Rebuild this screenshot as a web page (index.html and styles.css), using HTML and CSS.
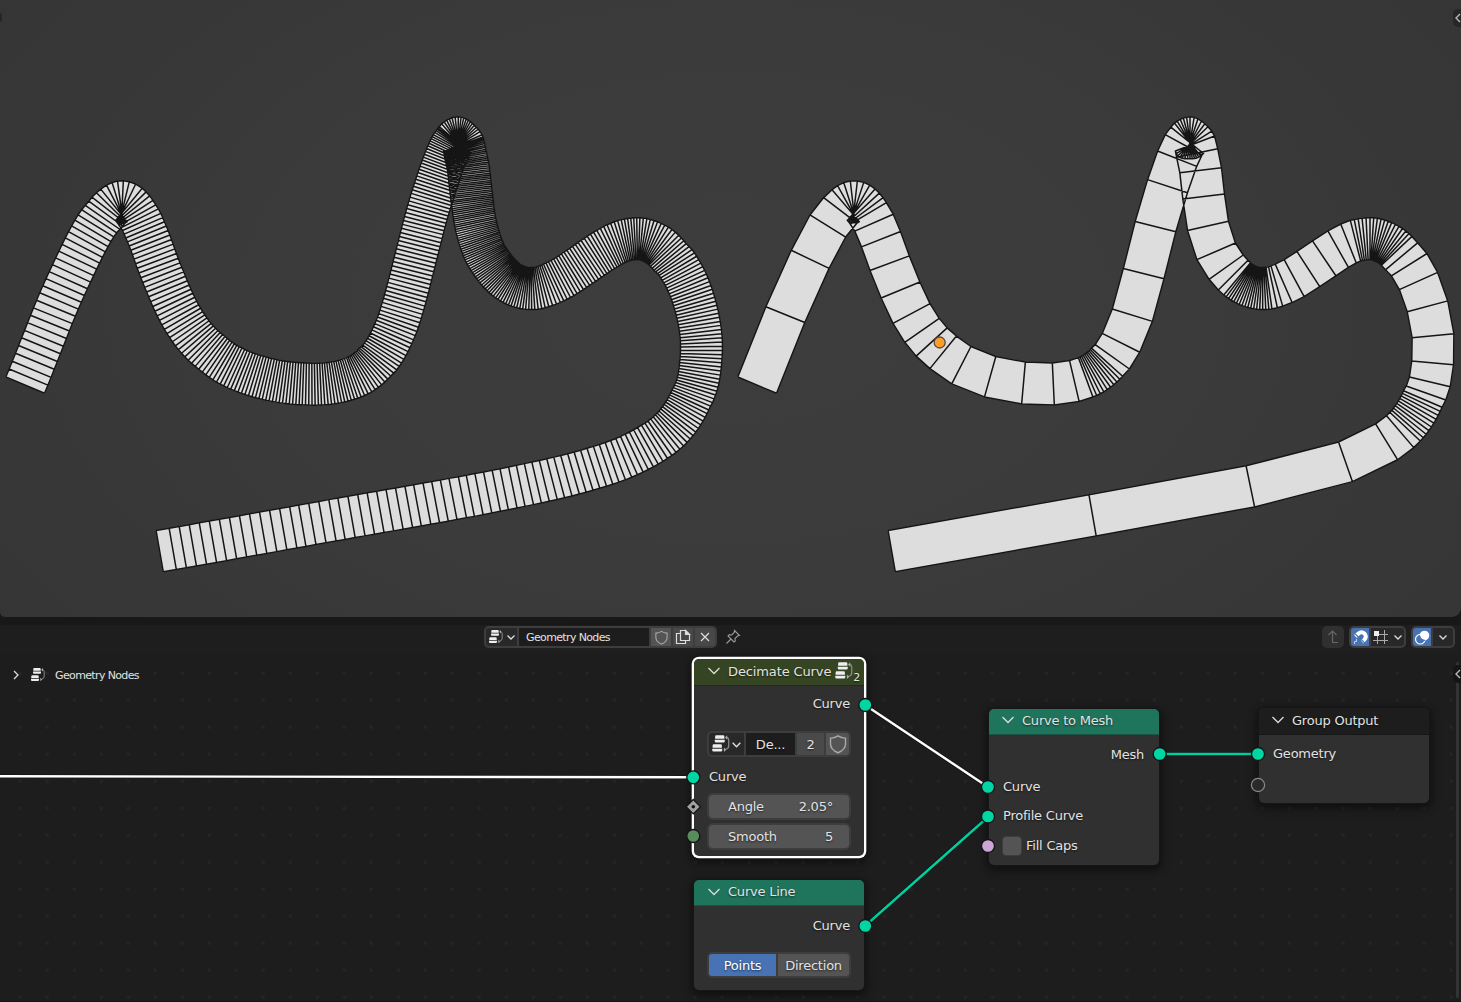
FILE: index.html
```html
<!DOCTYPE html>
<html lang="en">
<head>
<meta charset="utf-8">
<title>Geometry Nodes</title>
<link rel="stylesheet" href="styles.css">
</head>
<body>
<svg class="defs" width="0" height="0">
  <symbol id="tree" viewBox="0 0 16 16">
    <path d="M4.300 1h5.400q1 0 1 1v1.800H3.300V2q0-1 1-1zM3 4.600h8v1.200q0 1-1 1H4q-1 0-1-1zM2.300 8.200h5.400q1 0 1 1V11H1.300V9.200q0-1 1-1zM1 11.800h8V13q0 1-1 1H2q-1 0-1-1z" fill="#eee"/>
    <path d="M12.500 2.700q1.700.3 1.700 2v4.500q0 2.500-2.500 3" fill="none" stroke="#8c8c8c"/>
    <path d="M13 1v3.500L11.200 2.700zM10.300 10.700v3.600l2-1.800z" fill="#aaa"/>
  </symbol>
  <symbol id="down" viewBox="0 0 10 10"><path d="M1.500 3.500 5 7l3.500-3.500" fill="none" stroke="#ddd" stroke-width="1.300"/></symbol>
  <symbol id="shield" viewBox="0 0 16 16"><path d="M8 1.500q3 2 6 1.800V8q0 4.500-6 7-6-2.500-6-7V3.300q3 .2 6-1.800z" fill="none" stroke="#aaa" stroke-width="1.100"/></symbol>
</svg>

<main class="screen">
  <section class="viewport">
    <svg id="mesh" class="mesh" viewBox="0 0 1461 617" width="1461" height="617"></svg>
    <span class="tab tab-top"><svg width="7" height="12" viewBox="0 0 7 12"><path d="M6 2 2 6l4 4" fill="none" stroke="#bbb" stroke-width="1.400"/></svg></span>
    <span class="stub"></span>
  </section>

  <section class="editor">
    <header class="toolbar">
      <div class="group datablock">
        <span class="cell pick"><svg width="16" height="16"><use href="#tree"/></svg><svg width="10" height="10"><use href="#down"/></svg></span>
        <span class="cell name">Geometry Nodes</span>
        <span class="cell light"><svg width="15" height="15"><use href="#shield"/></svg></span>
        <span class="cell mid"><svg width="16" height="16" viewBox="0 0 16 16" fill="none" stroke="#ddd" stroke-width="1.200"><path d="M5.500 1.500h5l4 4v6h-9zM5 4.500H1.500v10h9V12"/><path d="M10.500 1.500v4h4z" fill="#ddd"/></svg></span>
        <span class="cell mid"><svg width="12" height="12" viewBox="0 0 12 12"><path d="m2 2 8 8m0-8-8 8" stroke="#ddd" stroke-width="1.200"/></svg></span>
      </div>
      <svg class="pin" width="16" height="16" viewBox="0 0 16 16"><path d="M9.500 1.500 14.500 6.500 12.500 7l-2.500 2.500.3 2.500-1.300 1L3 7l1.300-1.300 2.400.3L9.200 3.500zM6 10l-4.500 4.500" fill="none" stroke="#999" stroke-width="1.100"/></svg>
      <div class="tools">
        <span class="group up"><svg width="18" height="18" viewBox="0 0 18 18"><path d="M14 14.500H8.500V3M4.500 7l4-4 4 4" fill="none" stroke="#666" stroke-width="1.200"/></svg></span>
        <div class="group snap">
          <span class="cell blue"><svg width="17" height="17" viewBox="0 0 17 17"><path d="M3.500 7.500 6.500 4.500Q9.500 2 12.500 4.500q2.700 3-.3 6.500l-2 2" fill="none" stroke="#fff" stroke-width="4"/><path d="m3.300 5 3.500 3.500M9.300 10.500l3.500 3.500" stroke="#4772b3" stroke-width="1.100"/><path d="M2.500 15v-2.500h2V10" fill="none" stroke="#c5d3e9"/></svg></span>
          <span class="cell grid"><svg width="16" height="16" viewBox="0 0 16 16"><path d="M5.500 6v9M12.500 1v14M6 5.500h10M1 11.500h15" stroke="#aaa"/><path d="M2 2h5v5H2z" fill="#eee"/></svg><svg width="10" height="10"><use href="#down"/></svg></span>
        </div>
        <div class="group over">
          <span class="cell blue"><svg width="17" height="17" viewBox="0 0 17 17"><circle cx="10.500" cy="6.500" r="4.800" fill="#fff"/><circle cx="6.300" cy="10.200" r="4.800" fill="none" stroke="#fff" stroke-width="1.200"/><path d="M5.700 6.500a4.800 4.800 0 0 0 5.200 4.800" fill="none" stroke="#4772b3" stroke-width="1.200"/></svg></span>
          <span class="cell drop"><svg width="10" height="10"><use href="#down"/></svg></span>
        </div>
      </div>
    </header>

    <div class="crumbs">
      <svg width="10" height="12" viewBox="0 0 10 12"><path d="M3 2l4 4-4 4" fill="none" stroke="#ddd" stroke-width="1.300"/></svg>
      <svg class="crumb-icon" width="16" height="16"><use href="#tree"/></svg>
      <span>Geometry Nodes</span>
    </div>

    <svg class="wires" width="1461" height="377" viewBox="0 625 1461 377" fill="none">
      <g stroke="#111" stroke-width="4" opacity=".6"><path d="M0 776.300 693 777.300M865 705 988 787M865 926 988 817M1160 754h98"/></g>
      <g stroke-width="2.400"><path d="M0 776.300 693 777.300M865 705 988 787" stroke="#fff"/><path d="M865 926 988 817M1160 754h98" stroke="#00cf9f"/></g>
    </svg>

    <article class="node decimate">
      <h2 class="head"><svg width="14" height="10" viewBox="0 0 14 10"><path d="M1.500 2 7 7.500 12.500 2" fill="none" stroke="#ddd" stroke-width="1.300"/></svg>Decimate Curve<svg class="head-icon" width="20" height="20"><use href="#tree"/></svg><small>2</small></h2>
      <div class="row out">Curve</div>
      <div class="group block">
        <span class="cell pick"><svg width="20" height="20"><use href="#tree"/></svg><svg width="11" height="11"><use href="#down"/></svg></span>
        <span class="cell name">De...</span>
        <span class="cell users">2</span>
        <span class="cell light"><svg width="20" height="20"><use href="#shield"/></svg></span>
      </div>
      <div class="row in">Curve</div>
      <div class="field"><span>Angle</span><span>2.05°</span></div>
      <div class="field"><span>Smooth</span><span>5</span></div>
    </article>

    <article class="node line">
      <h2 class="head"><svg width="14" height="10" viewBox="0 0 14 10"><path d="M1.500 2 7 7.500 12.500 2" fill="none" stroke="#ddd" stroke-width="1.300"/></svg>Curve Line</h2>
      <div class="row out">Curve</div>
      <div class="group toggle"><span class="cell blue">Points</span><span class="cell light">Direction</span></div>
    </article>

    <article class="node tomesh">
      <h2 class="head"><svg width="14" height="10" viewBox="0 0 14 10"><path d="M1.500 2 7 7.500 12.500 2" fill="none" stroke="#ddd" stroke-width="1.300"/></svg>Curve to Mesh</h2>
      <div class="row out">Mesh</div>
      <div class="row in first">Curve</div>
      <div class="row in">Profile Curve</div>
      <div class="row in check"><i></i>Fill Caps</div>
    </article>

    <article class="node output">
      <h2 class="head"><svg width="14" height="10" viewBox="0 0 14 10"><path d="M1.500 2 7 7.500 12.500 2" fill="none" stroke="#ddd" stroke-width="1.300"/></svg>Group Output</h2>
      <div class="row in">Geometry</div>
    </article>

    <svg class="wires" width="1461" height="377" viewBox="0 625 1461 377">
      <g fill="#00d6a3" stroke="#141414" stroke-width="1.300">
        <circle cx="865.300" cy="705" r="6.500"/><circle cx="693.300" cy="777.300" r="6.500"/>
        <circle cx="865.300" cy="926" r="6.500"/><circle cx="988" cy="787" r="6.500"/>
        <circle cx="988" cy="816.500" r="6.500"/><circle cx="1159.700" cy="754" r="6.500"/>
        <circle cx="1258" cy="754" r="6.500"/>
        <circle cx="693.300" cy="836" r="6.500" fill="#598c5c"/>
        <circle cx="988" cy="846" r="6.500" fill="#cca6d6"/>
        <path d="m693.300 799.500 7.200 7.200-7.200 7.200-7.200-7.200z" fill="#a1a1a1"/>
      </g>
      <circle cx="693.300" cy="806.700" r="1.800" fill="#111"/>
      <circle cx="1258" cy="785" r="6.600" fill="#2a2a2a" stroke="#8a8a8a" stroke-width="1.200"/>
    </svg>
    <span class="scroll"></span>
    <span class="tab tab-node"><svg width="7" height="12" viewBox="0 0 7 12"><path d="M6 2 2 6l4 4" fill="none" stroke="#bbb" stroke-width="1.400"/></svg></span>
  </section>
</main>
<script src="mesh.js"></script>
</body>
</html>
```
FILE: styles.css
```css
* { box-sizing: border-box; }
body {
  margin: 0;
  background: #181818;
  color: #e2e2e2;
  font: 13px/1 "DejaVu Sans", "Noto Sans", sans-serif;
  overflow: hidden;
}
svg { display: block; flex: none; }
.defs { position: absolute; }
.screen { display: flex; flex-direction: column; gap: 8px; width: 1461px; height: 1002px; background: #181818; }

.viewport {
  position: relative;
  flex: 0 0 617px;
  overflow: hidden;
  border-radius: 0 0 9px 5px;
  background: radial-gradient(ellipse 900px 560px at 50% 50%, #3d3d3d 0%, #3b3b3b 50%, #353535 100%);
}
.tab { position: absolute; right: 0; display: flex; align-items: center; width: 8px; height: 18px; padding-left: 1px; border-radius: 5px 0 0 5px; background: #262626; }
.tab-top { top: 9px; }
.tab-node { top: 40px; background: #151515; }
.stub { position: absolute; left: 0; top: 13px; width: 2px; height: 9px; border-radius: 0 2px 2px 0; background: #262626; }

.editor {
  position: relative;
  flex: 0 0 377px;
  overflow: hidden;
  border-bottom: 1px solid #151515;
  background: #1d1d1d radial-gradient(circle, #252525 1.500px, transparent 1.900px) 6.800px 7.800px / 27px 27px;
}
.toolbar { display: flex; align-items: center; height: 28px; padding: 1px 6px 5px 484px; background: #1e1e1e; font-size: 11px; letter-spacing: -.63px; }
.group { display: flex; gap: 2px; padding: 2px; border-radius: 5px; background: #3d3d3d; height: 22px; }
.cell { display: flex; align-items: center; justify-content: center; }
.cell:first-child { border-radius: 3px 0 0 3px; }
.cell:last-child { border-radius: 0 3px 3px 0; }
.pick, .grid, .drop { background: #282828; }
.light { background: #545454; }
.mid { background: #484848; }
.blue { background: #4772b3; color: #fff; }
.datablock { width: 233px; }
.datablock .pick { width: 31px; gap: 2px; }
.datablock .name { width: 130px; padding-left: 7px; justify-content: flex-start; }
.name { background: #1d1d1d; }
.datablock .light, .datablock .mid { width: 20px; }
.pin { margin-left: 8px; }
.tools { display: flex; margin-left: auto; gap: 5px; }
.up { width: 22px; background: #303030; }
.snap { width: 57px; }
.over { width: 44px; }
.tools .blue { width: 18px; }
.grid { width: 33px; gap: 5px; }
.drop { width: 20px; }

.crumbs { display: flex; align-items: center; height: 44px; padding-left: 11px; font-size: 11px; letter-spacing: -.63px; }
.crumb-icon { margin: 0 9px; }
.wires { position: absolute; left: 0; top: 0; }

.node {
  position: absolute;
  width: 170px;
  border-radius: 5px;
  background: #303030;
  box-shadow: 0 0 0 1px #161616, 0 3px 9px 3px rgba(0, 0, 0, .45);
  letter-spacing: -.220px;
  text-shadow: 0 1px 2px rgba(0, 0, 0, .6);
}
.decimate { left: 694px; top: 34px; height: 197px; box-shadow: 0 0 0 2.300px #fff, 0 0 0 3.300px #161616, 0 3px 9px 4px rgba(0, 0, 0, .45); }
.line { left: 694px; top: 255px; height: 110px; }
.tomesh { left: 989px; top: 84px; height: 156px; }
.output { left: 1259px; top: 83px; height: 95px; }
.head { display: flex; align-items: center; gap: 7px; height: 26px; margin: 0; padding: 0 0 2px 13px; border-radius: 5px 5px 0 0; border-bottom: 1px solid #1c5345; background: #1f745c; font-size: 13px; font-weight: 400; white-space: nowrap; }
.decimate .head { background: #354422; border-color: #222b18; height: 27px; letter-spacing: -.120px; }
.tomesh .head { padding: 0 0 3px 12px; }
.output .head { background: #1d1d1d; border-color: #161616; height: 27px; padding-left: 12px; }
.head-icon { margin: 0 -8px 0 -4px; }
.head small { align-self: flex-end; font-size: 11px; }
.row { display: flex; align-items: center; height: 29px; }
.out { justify-content: flex-end; padding-right: 14px; margin-top: 5px; }
.decimate .out { margin-top: 3px; }
.tomesh .out { padding-right: 15px; }
.in { padding-left: 14px; }
.block, .toggle { width: 144px; height: 26px; margin: 13px 0 0 13px; border-radius: 5px; }
.block { margin-bottom: 5px; }
.block .pick { width: 35px; }
.block .name { width: 49px; }
.block .users { width: 27px; background: #4a4a4a; }
.block .light { width: 23px; }
.decimate .in { padding-left: 15px; }
.field { display: flex; align-items: center; justify-content: space-between; width: 144px; height: 27px; margin: 2px 0 0 13px; padding: 0 16px 0 19px; border: 2px solid #3d3d3d; border-radius: 6px; background: #545454; }
.field + .field { margin-top: 3px; }
.toggle .cell { width: 72px; }
.toggle .blue { width: 68px; }
.toggle { margin-top: 12px; }
.tomesh .first { margin-top: 3px; }
.check i { width: 20px; height: 20px; margin: 0 4px 0 -1px; border: 1.500px solid #3d3d3d; border-radius: 4px; background: #545454; }
.tomesh .check { margin-top: 1px; }
.output .row { margin-top: 4px; }
.scroll { position: absolute; left: 1456px; top: 37px; width: 3px; height: 336px; border-radius: 2px; background: #333; }
```
FILE: mesh.js
```js
// Each rib: left x, left y, right x, right y, faces up to the next rib, spacing of the dense mesh.
var parts = [
  { kx: 3, ky: 3, x: 730, y: 100, ribs: [
    [23,831,140,880,1,8.6],[109,621,223,667,1,8],[184,451,297,505,1,7.2],[240,345,347,411,1,5.8],
    [280,292,382,370,1,4.4],[306,269,388,365,3,3],[361,243,375,368,1,2],[382,243,368,368,3,2],
    [435,267,352,361,3,3],[469,308,361,372,1,3.8],[489,343,375,393,1,4.2],[510,395,396,440,1,4.7],
    [537,468,421,511,1,5],[567,547,456,593,1,5],[598,612,491,669,1,4.6],[625,657,527,725,1,4.3],
    [650,685,560,767,1,4],[677,711,602,803,1,3.8],[722,741,666,850,1,3.5],[797,771,764,889,1,3.2],
    [886,787,875,911,1,3],[967,789,973,915,1,2.9],[1019,783,1047,903,1,2.8]] },
  { kx: 3, ky: 3, x: 1090, y: 100, ribs: [
    [-34,775,8,889,9,2.8],[5,745,97,828,1,3.1],[17,735,117,806,1,3.4],[38,701,148,756,1,3.8],
    [67,627,187,664,1,4.2],[101,506,221,536,1,4.4],[137,365,256,395,1,4.1],[173,239,292,278,1,3.5],
    [203,153,320,199,1,2.8],[226,104,336,164,1,1.8],[243,82,340,160,1,.7],[253,69,332,168,5,.55],
    [300,49,300,178,5,.55],[354,80,263,168,2,.65],[374,108,256,153,1,1.1],[383,146,260,172,1,1.6],
    [394,203,270,218,1,1.8],[402,282,280,297,1,1.9],[414,364,294,391,1,2],[434,430,323,478,1,2],
    [457,467,360,536,1,2],[472,483,387,568,1,2],[480,490,403,583,14,1.9],[518,501,518,630,3,2],
    [528,501,546,628,2,2.5],[543,498,578,618,1,2.9],[556,493,606,607,1,3.2],[583,480,642,589,1,3.4],
    [622,456,688,558,1,3.5],[669,425,736,525,1,3.5],[715,395,774,500,1,3.3],[753,374,798,487,1,3],
    [781,361,812,483,5,2.6],[840,351,840,481,6,2.1],[905,368,856,484,6,2.5],[965,410,875,495,1,3],
    [981,430,888,508,1,3.2],[1010,461,905,527,1,3.4],[1041,518,930,568,1,3.6],[1072,603,953,635,1,3.7],
    [1091,701,967,713,1,3.7],[1089,794,967,783,1,3.6],[1080,860,959,831,1,3.5],[1067,900,949,858,1,3.4]] },
  { kx: 2.653, ky: 3, x: 870, y: 360, ribs: [
    [1516,141,1417,93,9,3.4],[1459,242,1380,158,1,3.7],[1442,262,1371,168,1,3.9],[1399,298,1342,193,1,4.7],
    [1280,365,1243,246,1,6.3],[1020,439,998,319,1,8.3],[600,527,581,405,1,9.8],[67,635,48,512,1,10.4]] }
];
var HALF = 21, knots = [];
parts.forEach(function (p) {
  p.ribs.forEach(function (r) {
    var ax = r[0] / p.kx + p.x, ay = r[1] / p.ky + p.y, bx = r[2] / p.kx + p.x, by = r[3] / p.ky + p.y;
    var a = Math.atan2(by - ay, bx - ax);
    if (knots.length) {
      var prev = knots[knots.length - 1].a;
      while (a - prev > Math.PI) a -= 2 * Math.PI;
      while (a - prev < -Math.PI) a += 2 * Math.PI;
    }
    knots.push({ x: (ax + bx) / 2, y: (ay + by) / 2, a: a, n: r[4], s: r[5] });
  });
});

// Hermite point between two ribs, tangents perpendicular to the ribs.
function between(p, q, t) {
  var d = Math.hypot(q.x - p.x, q.y - p.y), t2 = t * t, t3 = t2 * t;
  var h0 = 2 * t3 - 3 * t2 + 1, h1 = t3 - 2 * t2 + t, h2 = 3 * t2 - 2 * t3, h3 = t3 - t2;
  return {
    x: h0 * p.x + h1 * d * Math.sin(p.a) + h2 * q.x + h3 * d * Math.sin(q.a),
    y: h0 * p.y - h1 * d * Math.cos(p.a) + h2 * q.y - h3 * d * Math.cos(q.a),
    a: p.a + (q.a - p.a) * t,
    s: p.s + (q.s - p.s) * t
  };
}
function ends(c, dx) {
  var ux = Math.cos(c.a) * HALF, uy = Math.sin(c.a) * HALF;
  return [(c.x + dx - ux).toFixed(2) + ' ' + (c.y - uy).toFixed(2), (c.x + dx + ux).toFixed(2) + ' ' + (c.y + uy).toFixed(2)];
}

var sparse = [], dense = [], acc = 0, last = knots[0];
dense.push(last);
for (var i = 0; i < knots.length - 1; i++) {
  var p = knots[i], q = knots[i + 1];
  for (var j = 0; j < p.n; j++) sparse.push(between(p, q, j / p.n));
  for (var m = 1; m <= 200; m++) {
    var c = between(p, q, m / 200);
    acc += Math.hypot(c.x - last.x, c.y - last.y) / c.s;
    last = c;
    if (acc >= 1) { dense.push(c); acc -= 1; }
  }
}
sparse.push(knots[knots.length - 1]);
if (acc < 0.5) dense.pop();
dense.push(knots[knots.length - 1]);

function ribbon(list, dx, width) {
  var e = list.map(function (c) { return ends(c, dx); }), faces = '', lines = '';
  for (var i = 0; i < e.length; i++) {
    lines += 'M' + e[i][0] + 'L' + e[i][1];
    if (i) faces += '<path d="M' + e[i - 1][0] + 'L' + e[i][0] + 'L' + e[i][1] + 'L' + e[i - 1][1] + 'z"/>';
  }
  [0, 1].forEach(function (s) { lines += 'M' + e.map(function (r) { return r[s]; }).join('L'); });
  return '<g fill="#ddd" stroke="#ddd" stroke-width=".4">' + faces + '</g><path d="' + lines + '" fill="none" stroke="#151515" stroke-linejoin="round" stroke-width="' + width + '"/>';
}
document.getElementById('mesh').innerHTML =
  ribbon(dense, -732, 1.5) + ribbon(sparse, 0, 1.5) +
  '<circle cx="939.700" cy="342.500" r="5.500" fill="#ff9d2a" stroke="#5a4a3c" stroke-width="1.300"/>';
```
